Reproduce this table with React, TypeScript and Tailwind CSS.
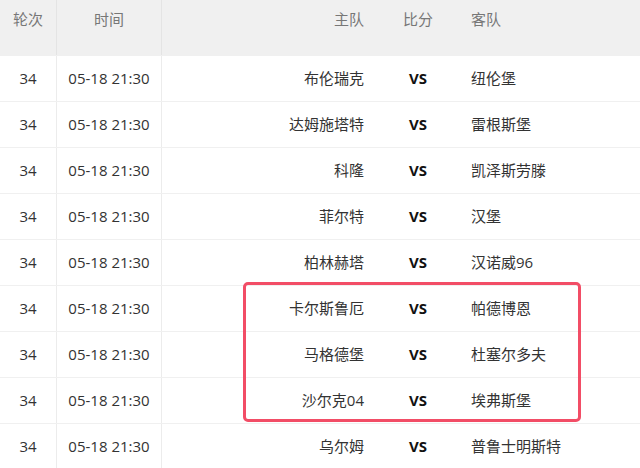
const rows = [
  ["布伦瑞克", "纽伦堡"],
  ["达姆施塔特", "雷根斯堡"],
  ["科隆", "凯泽斯劳滕"],
  ["菲尔特", "汉堡"],
  ["柏林赫塔", "汉诺威96"],
  ["卡尔斯鲁厄", "帕德博恩"],
  ["马格德堡", "杜塞尔多夫"],
  ["沙尔克04", "埃弗斯堡"],
  ["乌尔姆", "普鲁士明斯特"],
];

const App = () => {
  return (
    <div
      className="relative w-[640px] h-[468px] overflow-hidden bg-white text-[15px] text-[#333]"
      style={{ fontFamily: '"Open Sans", "Noto Sans CJK SC", sans-serif' }}
    >
      <div className="flex h-[55px] bg-[#f0f0f0] text-[#777]">
        <div className="w-[57px] border-r border-[#e4e4e4] pt-[8px] text-center leading-[22px]">轮次</div>
        <div className="w-[105px] border-r border-[#e4e4e4] pt-[8px] text-center leading-[22px]">时间</div>
        <div className="w-[218px] pr-[16px] pt-[8px] text-right leading-[22px]">主队</div>
        <div className="w-[76px] pt-[8px] text-center leading-[22px]">比分</div>
        <div className="flex-1 pl-[15px] pt-[8px] leading-[22px]">客队</div>
      </div>
      {rows.map(([home, away], i) => (
        <div key={i} className="flex h-[46px] items-stretch border-t border-[#f0f0f0] first:border-t-0">
          <div className="flex w-[57px] items-center justify-center border-r border-[#ececec]">34</div>
          <div className="flex w-[105px] items-center justify-center border-r border-[#ececec]">05-18 21:30</div>
          <div className="flex w-[218px] items-center justify-end pr-[16px]">{home}</div>
          <div className="flex w-[76px] items-center justify-center font-bold text-[#111]">VS</div>
          <div className="flex flex-1 items-center pl-[15px]">{away}</div>
        </div>
      ))}
      <div className="absolute left-[243px] top-[282px] h-[140px] w-[338px] rounded-[5px] border-[3px] border-[#f24d66]" />
    </div>
  );
};

export default App;
